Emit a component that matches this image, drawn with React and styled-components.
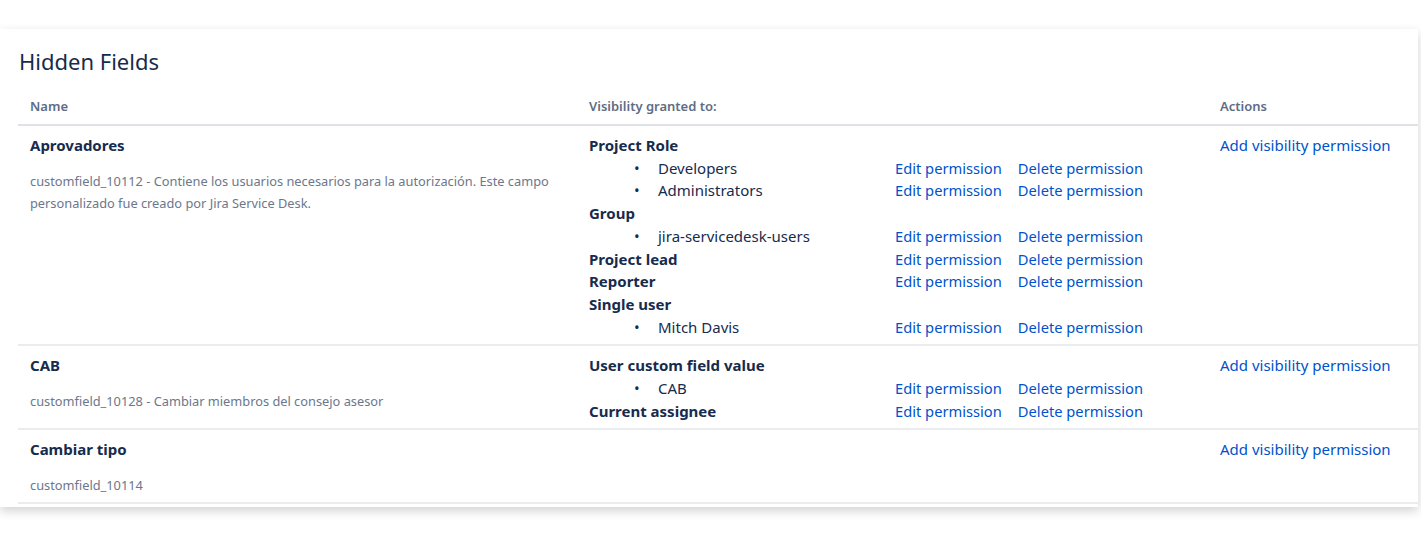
import React from "react";
import styled, { createGlobalStyle } from "styled-components";

const GlobalStyle = createGlobalStyle`
    body {
        margin: 0;
        background: #ffffff;
        font-family: "Noto Sans", "Open Sans", sans-serif;
        color: #172b4d;
    }
`;

const Page = styled.div`
    padding-top: 29px;
    height: 537px;
    box-sizing: border-box;
    overflow: hidden;
`;

const Card = styled.div`
    width: 1418px;
    background: #ffffff;
    box-shadow: 0 4px 10px rgba(0, 0, 0, 0.18);
    padding: 16px 0 3px 18px;
    box-sizing: border-box;
`;

const Title = styled.h2`
    margin: 0 0 8px 1px;
    font-size: 22px;
    font-weight: 400;
    line-height: 32px;
    color: #172b4d;
`;

const Table = styled.div`
    display: grid;
    grid-template-columns: 559px 631px 1fr;
`;

const HeadCell = styled.div`
    padding: 12px 12px 9px;
    font-size: 13px;
    font-weight: 600;
    line-height: 18px;
    color: #5e6c84;
    border-bottom: 2px solid #dfe1e6;
`;

const Cell = styled.div`
    padding: 8px 12px 6px;
    border-bottom: 2px solid #ebecf0;
    font-size: 15px;
    line-height: 22.7px;
`;

const FieldName = styled.div`
    font-weight: 700;
    color: #172b4d;
`;

const FieldDesc = styled.div`
    margin-top: 13px;
    font-size: 12.8px;
    line-height: 22px;
    color: #6b778c;
    max-width: 530px;
`;

const PermGrid = styled.div`
    display: grid;
    grid-template-columns: 290px auto auto 1fr;
    column-gap: 16px;
    font-size: 14.7px;
`;

const TypeLabel = styled.div`
    grid-column: 1;
    font-weight: 700;
    font-size: 15px;
    color: #172b4d;
`;

const Item = styled.div`
    grid-column: 1;
    padding-left: 69px;
    color: #172b4d;
    font-size: 15px;
    position: relative;

    &::before {
        content: "•";
        position: absolute;
        left: 45px;
    }
`;

const Link = styled.a`
    color: #0052cc;
    text-decoration: none;
    cursor: pointer;
`;

const fields = [
    {
        name: "Aprovadores",
        desc: "customfield_10112 - Contiene los usuarios necesarios para la autorización. Este campo personalizado fue creado por Jira Service Desk.",
        perms: [
            { type: "Project Role", items: ["Developers", "Administrators"] },
            { type: "Group", items: ["jira-servicedesk-users"] },
            { type: "Project lead" },
            { type: "Reporter" },
            { type: "Single user", items: ["Mitch Davis"] },
        ],
    },
    {
        name: "CAB",
        desc: "customfield_10128 - Cambiar miembros del consejo asesor",
        perms: [
            { type: "User custom field value", items: ["CAB"] },
            { type: "Current assignee" },
        ],
    },
    {
        name: "Cambiar tipo",
        desc: "customfield_10114",
        perms: [],
    },
];

const Actions = () => (
    <>
        <Link>Edit permission</Link>
        <Link>Delete permission</Link>
        <span />
    </>
);

const Permissions = ({ perms }) => (
    <PermGrid>
        {perms.map((p) => (
            <React.Fragment key={p.type}>
                <TypeLabel>{p.type}</TypeLabel>
                {p.items ? (
                    <>
                        <span />
                        <span />
                        <span />
                        {p.items.map((it) => (
                            <React.Fragment key={it}>
                                <Item>{it}</Item>
                                <Actions />
                            </React.Fragment>
                        ))}
                    </>
                ) : (
                    <Actions />
                )}
            </React.Fragment>
        ))}
    </PermGrid>
);

const App = () => (
    <Page>
        <GlobalStyle />
        <Card>
            <Title>Hidden Fields</Title>
            <Table>
                <HeadCell>Name</HeadCell>
                <HeadCell>Visibility granted to:</HeadCell>
                <HeadCell>Actions</HeadCell>
                {fields.map((f) => (
                    <React.Fragment key={f.name}>
                        <Cell>
                            <FieldName>{f.name}</FieldName>
                            <FieldDesc>{f.desc}</FieldDesc>
                        </Cell>
                        <Cell>
                            <Permissions perms={f.perms} />
                        </Cell>
                        <Cell>
                            <Link>Add visibility permission</Link>
                        </Cell>
                    </React.Fragment>
                ))}
            </Table>
        </Card>
    </Page>
);

export default App;
